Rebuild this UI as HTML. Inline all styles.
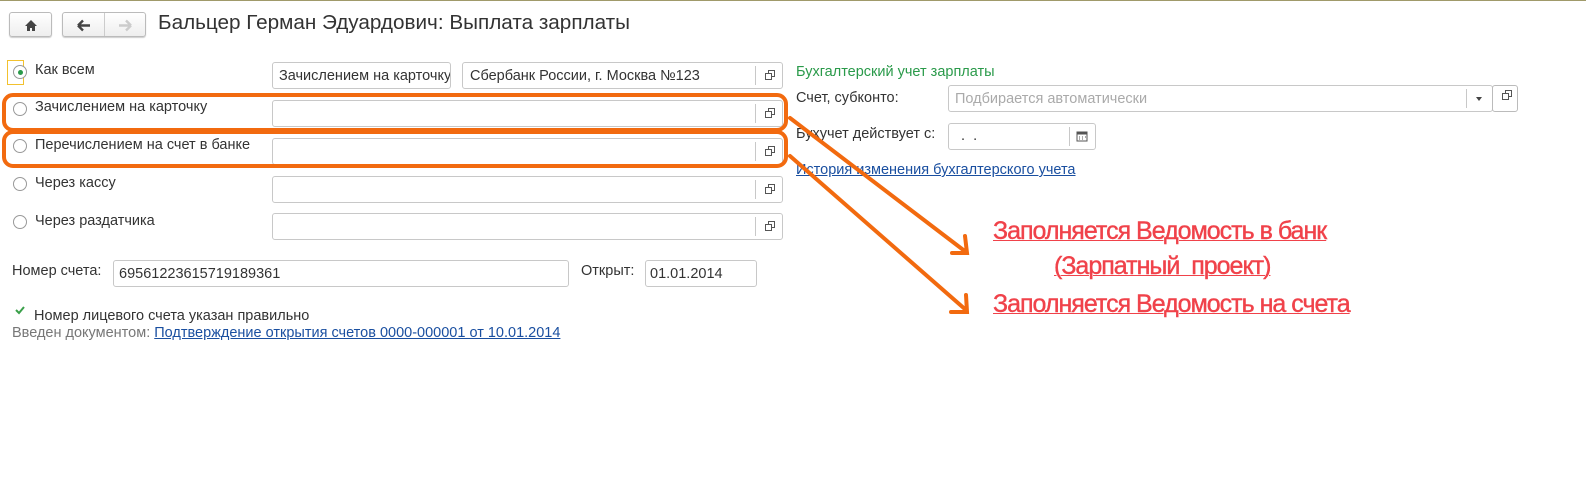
<!DOCTYPE html>
<html><head><meta charset="utf-8"><style>
body{margin:0;width:1586px;height:496px;background:#fff;position:relative;overflow:hidden;font-family:"Liberation Sans",Arial,sans-serif;font-size:14.5px;color:#333}
.a{position:absolute;white-space:nowrap}
.inp{position:absolute;border:1px solid #c8c8c8;border-radius:3px;background:#fff;box-sizing:border-box}
.cp{position:absolute;right:0;top:3px;bottom:3px;width:26px;border-left:1px solid #c8c8c8}
.cp:after{content:"";position:absolute;left:9px;top:7px;width:5px;height:5px;border:1px solid #555;box-shadow:3px -3px 0 -1px #fff,3px -3px 0 0 #555}
.rad{position:absolute;width:14px;height:14px;border:1px solid #999;border-radius:50%;box-sizing:border-box;background:#fff}
.btn{position:absolute;border:1px solid #bbb;border-radius:3px;background:linear-gradient(#fff,#eee);box-sizing:border-box;box-shadow:0 1px 1px #ccc}
.red{position:absolute;color:#f0424a;font-size:25px;text-decoration:underline;text-decoration-thickness:1px;white-space:nowrap;transform-origin:0 0;letter-spacing:-1px;-webkit-text-stroke:0.4px #f0424a}
a{color:#1a4fa0}
</style></head><body>
<div class="a" style="left:0;top:0;width:1586px;height:1px;background:#a09a6a"></div>
<div class="btn" style="left:9px;top:12px;width:43px;height:25px"><svg width="43" height="25" style="position:absolute;left:0;top:0"><path d="M21 7 L15 13 H17 V18 H20 V15 H22 V18 H25 V13 H27 Z" fill="#444"/></svg></div>
<div class="btn" style="left:62px;top:12px;width:84px;height:25px"><div style="position:absolute;left:41px;top:0;bottom:0;border-left:1px solid #ccc"></div>
<svg width="84" height="25" style="position:absolute;left:0;top:0"><path d="M15 12.5 H27 M15 12.5 L20 7.5 M15 12.5 L20 17.5" stroke="#444" stroke-width="2.4" fill="none"/><path d="M56 12.5 H68 M68 12.5 L63 7.5 M68 12.5 L63 17.5" stroke="#ccc" stroke-width="2.4" fill="none"/></svg></div>
<div class="a" style="left:158px;top:11px;font-size:20.7px;color:#333">Бальцер Герман Эдуардович: Выплата зарплаты</div>

<div class="a" style="left:7px;top:60px;width:15px;height:23px;border:1px solid #f2c12e"></div>
<div class="rad" style="left:13px;top:65px"><div style="position:absolute;left:3.5px;top:3.5px;width:5px;height:5px;border-radius:50%;background:#2a9a4a"></div></div>
<div class="a" style="left:35px;top:62px">Как всем</div>
<div class="inp" style="left:272px;top:62px;width:179px;height:27px;overflow:hidden"><span class="a" style="left:6px;top:5px">Зачислением на карточку</span></div>
<div class="inp" style="left:462px;top:62px;width:321px;height:27px"><span class="a" style="left:7px;top:5px">Сбербанк России, г. Москва №123</span><div class="cp"></div></div>

<div class="rad" style="left:13px;top:102px"></div><div class="a" style="left:35px;top:99px">Зачислением на карточку</div>
<div class="inp" style="left:272px;top:100px;width:511px;height:27px"><div class="cp"></div></div>
<div class="rad" style="left:13px;top:139px"></div><div class="a" style="left:35px;top:137px">Перечислением на счет в банке</div>
<div class="inp" style="left:272px;top:138px;width:511px;height:27px"><div class="cp"></div></div>
<div class="rad" style="left:13px;top:177px"></div><div class="a" style="left:35px;top:175px">Через кассу</div>
<div class="inp" style="left:272px;top:176px;width:511px;height:27px"><div class="cp"></div></div>
<div class="rad" style="left:13px;top:215px"></div><div class="a" style="left:35px;top:213px">Через раздатчика</div>
<div class="inp" style="left:272px;top:213px;width:511px;height:27px"><div class="cp"></div></div>

<div class="a" style="left:12px;top:263px">Номер счета:</div>
<div class="inp" style="left:113px;top:260px;width:456px;height:27px"><span class="a" style="left:5px;top:5px">69561223615719189361</span></div>
<div class="a" style="left:581px;top:263px">Открыт:</div>
<div class="inp" style="left:645px;top:260px;width:112px;height:27px"><span class="a" style="left:4px;top:5px">01.01.2014</span></div>
<svg class="a" style="left:14px;top:306px" width="12" height="10"><path d="M2 4 L5 7 L10 1" stroke="#3aa04a" stroke-width="2" fill="none"/></svg>
<div class="a" style="left:34px;top:308px">Номер лицевого счета указан правильно</div>
<div class="a" style="left:12px;top:325px;color:#777">Введен документом: <a style="color:#1a4fa0;text-decoration:underline">Подтверждение открытия счетов 0000-000001 от 10.01.2014</a></div>

<div class="a" style="left:796px;top:64px;color:#2a9a4a">Бухгалтерский учет зарплаты</div>
<div class="a" style="left:796px;top:90px">Счет, субконто:</div>
<div class="inp" style="left:948px;top:85px;width:545px;height:27px"><span class="a" style="left:6px;top:5px;color:#aaa">Подбирается автоматически</span><div style="position:absolute;right:0;top:3px;bottom:3px;width:25px;border-left:1px solid #c8c8c8"><div style="position:absolute;left:9px;top:8px;border:3px solid transparent;border-top:4px solid #444"></div></div></div>
<div class="btn" style="left:1492px;top:85px;width:26px;height:27px;box-shadow:none;background:#fff"><div class="cp" style="border:0;top:0;bottom:0;width:24px"></div></div>
<div class="a" style="left:796px;top:126px">Бухучет действует с:</div>
<div class="inp" style="left:948px;top:123px;width:148px;height:27px"><span class="a" style="left:12px;top:4px">.&nbsp; .</span><div style="position:absolute;right:0;top:3px;bottom:3px;width:25px;border-left:1px solid #c8c8c8"><svg width="25" height="20" style="position:absolute;left:0;top:0"><rect x="7" y="5" width="10" height="9" fill="#fff" stroke="#555"/><rect x="7" y="5" width="10" height="2.5" fill="#555"/><path d="M9 10h1M12 10h1M15 10h1M9 12h1M12 12h1" stroke="#555"/></svg></div></div>
<div class="a" style="left:796px;top:162px"><a style="text-decoration:underline">История изменения бухгалтерского учета</a></div>

<svg class="a" style="left:0;top:0" width="1586" height="496">
<rect x="4" y="95" width="782" height="35" rx="9" fill="none" stroke="#f26a0f" stroke-width="4"/>
<rect x="4" y="132" width="782" height="34" rx="9" fill="none" stroke="#f26a0f" stroke-width="4"/>
<g stroke="#f26a0f" stroke-width="4" fill="none" stroke-linecap="round">
<path d="M790 118 L966 252 M952 253 L967 253 L965 236"/>
<path d="M790 156 L966 310 M951 312 L967 312 L966 295"/>
</g></svg>

<div class="red" style="left:993px;top:217px;transform:scaleX(1.0)">Заполняется Ведомость в банк</div>
<div class="red" style="left:1054px;top:252px;transform:scaleX(1.0)">(Зарпатный&nbsp; проект)</div>
<div class="red" style="left:993px;top:290px;transform:scaleX(1.0)">Заполняется Ведомость на счета</div>
</body></html>
